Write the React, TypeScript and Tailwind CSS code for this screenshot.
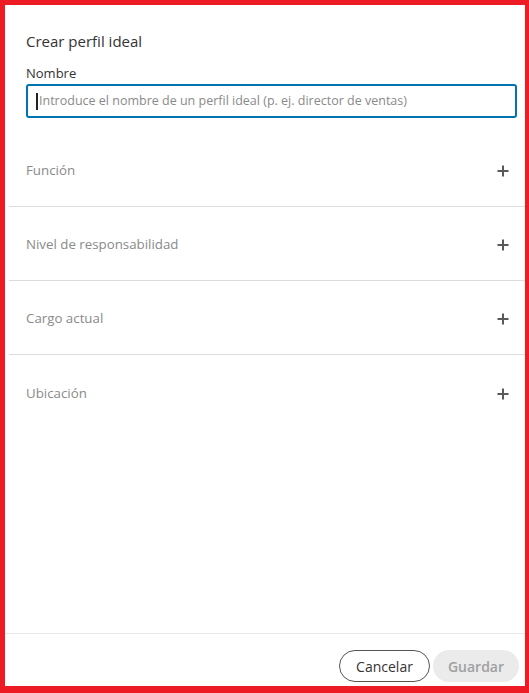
import React from "react";

const sections = ["Función", "Nivel de responsabilidad", "Cargo actual", "Ubicación"];

function PlusIcon() {
  return (
    <svg width="12" height="12" viewBox="0 0 12 12" className="text-[#5a5a5a]">
      <path d="M6 0.5v11M0.5 6h11" stroke="currentColor" strokeWidth="2" fill="none" />
    </svg>
  );
}

export default function App() {
  return (
    <div
      className="w-[529px] h-[693px] bg-white border-[#ed1c24] border-l-[5px] border-t-[5px] border-r-[4px] border-b-[7px] flex flex-col"
      style={{ fontFamily: '"Open Sans", "Noto Sans", sans-serif' }}
    >
      <div className="flex-1 flex flex-col">
        {/* Header + name field */}
        <div className="pt-[26px] pl-[21px] pr-[8px]">
          <h2 className="text-[15px] leading-[20px] text-[#333] font-normal">Crear perfil ideal</h2>
          <label className="block mt-[13px] text-[13px] leading-[18px] text-[#333]">Nombre</label>
          <div className="mt-[2px] h-[34px] border-2 border-[#0073b1] rounded-[3px] flex items-center pl-[8px]">
            <span className="w-[2px] h-[17px] bg-[#222] mr-[1px]" />
            <span className="text-[12.5px] text-[#8a8a8a] whitespace-nowrap">
              Introduce el nombre de un perfil ideal (p. ej. director de ventas)
            </span>
          </div>
        </div>

        {/* Sections */}
        <div className="mt-[15px] ml-[4px]">
          {sections.map((s, i) => (
            <div
              key={s}
              className={`h-[74px] flex items-center justify-between pl-[17px] pr-[16px] pt-[3px] ${
                i < sections.length - 1 ? "border-b border-[#dcdcdc]" : ""
              }`}
            >
              <span className="text-[13.3px] text-[#8a8a8a]">{s}</span>
              <PlusIcon />
            </div>
          ))}
        </div>
      </div>

      {/* Footer */}
      <div className="border-t border-[#e8e8e8] pt-[16px] pb-[4px] pr-[6px] flex justify-end gap-[3px]">
        <button className="w-[91px] h-[32px] rounded-full border border-[#555] text-[14px] text-[#333] bg-white">
          Cancelar
        </button>
        <button className="w-[86px] h-[32px] rounded-full bg-[#ebebeb] text-[14px] text-[#a0a0a0] font-semibold">
          Guardar
        </button>
      </div>
    </div>
  );
}
